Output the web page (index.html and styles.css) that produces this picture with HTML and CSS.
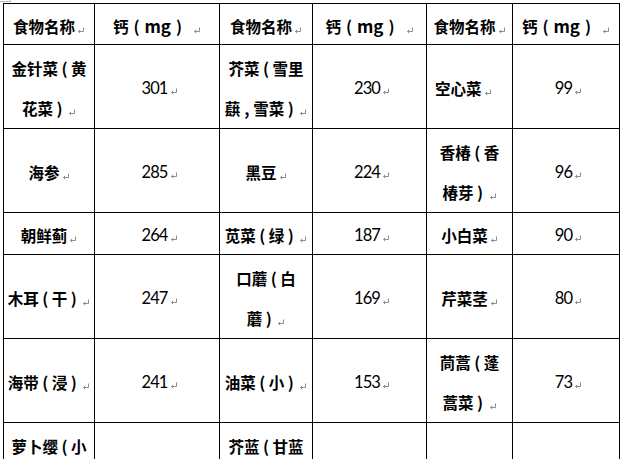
FILE: index.html
```html
<!DOCTYPE html>
<html lang="zh-CN">
<head>
<meta charset="utf-8">
<title>食物钙含量</title>
<link rel="stylesheet" href="styles.css">
</head>
<body>
<span class="handle"></span>
<div class="sheet">
  <div class="cell name"><p>食物名称<svg class="pm" viewBox="0 0 8 8"><path d="M6.5 1.5V5.5H1.5M3.2 3.8L1.5 5.5L3.2 7.2"/></svg></p></div>
  <div class="cell name"><p>钙<i class="w">(</i><b>mg</b><i class="w">)</i><svg class="pm" viewBox="0 0 8 8"><path d="M6.5 1.5V5.5H1.5M3.2 3.8L1.5 5.5L3.2 7.2"/></svg></p></div>
  <div class="cell name"><p>食物名称<svg class="pm" viewBox="0 0 8 8"><path d="M6.5 1.5V5.5H1.5M3.2 3.8L1.5 5.5L3.2 7.2"/></svg></p></div>
  <div class="cell name"><p>钙<i class="w">(</i><b>mg</b><i class="w">)</i><svg class="pm" viewBox="0 0 8 8"><path d="M6.5 1.5V5.5H1.5M3.2 3.8L1.5 5.5L3.2 7.2"/></svg></p></div>
  <div class="cell name"><p>食物名称<svg class="pm" viewBox="0 0 8 8"><path d="M6.5 1.5V5.5H1.5M3.2 3.8L1.5 5.5L3.2 7.2"/></svg></p></div>
  <div class="cell name"><p>钙<i class="w">(</i><b>mg</b><i class="w">)</i><svg class="pm" viewBox="0 0 8 8"><path d="M6.5 1.5V5.5H1.5M3.2 3.8L1.5 5.5L3.2 7.2"/></svg></p></div>

  <div class="cell name"><p>金针菜<i>(</i>黄<br>花菜<i>)</i><svg class="pm" viewBox="0 0 8 8"><path d="M6.5 1.5V5.5H1.5M3.2 3.8L1.5 5.5L3.2 7.2"/></svg></p></div>
  <div class="cell num"><p>301<svg class="pm" viewBox="0 0 8 8"><path d="M6.5 1.5V5.5H1.5M3.2 3.8L1.5 5.5L3.2 7.2"/></svg></p></div>
  <div class="cell name"><p>芥菜<i>(</i>雪里<br>蕻<i>,</i>雪菜<i>)</i><svg class="pm" viewBox="0 0 8 8"><path d="M6.5 1.5V5.5H1.5M3.2 3.8L1.5 5.5L3.2 7.2"/></svg></p></div>
  <div class="cell num"><p>230<svg class="pm" viewBox="0 0 8 8"><path d="M6.5 1.5V5.5H1.5M3.2 3.8L1.5 5.5L3.2 7.2"/></svg></p></div>
  <div class="cell name left"><p>空心菜<svg class="pm" viewBox="0 0 8 8"><path d="M6.5 1.5V5.5H1.5M3.2 3.8L1.5 5.5L3.2 7.2"/></svg></p></div>
  <div class="cell num"><p>99<svg class="pm" viewBox="0 0 8 8"><path d="M6.5 1.5V5.5H1.5M3.2 3.8L1.5 5.5L3.2 7.2"/></svg></p></div>

  <div class="cell name"><p>海参<svg class="pm" viewBox="0 0 8 8"><path d="M6.5 1.5V5.5H1.5M3.2 3.8L1.5 5.5L3.2 7.2"/></svg></p></div>
  <div class="cell num"><p>285<svg class="pm" viewBox="0 0 8 8"><path d="M6.5 1.5V5.5H1.5M3.2 3.8L1.5 5.5L3.2 7.2"/></svg></p></div>
  <div class="cell name"><p>黑豆<svg class="pm" viewBox="0 0 8 8"><path d="M6.5 1.5V5.5H1.5M3.2 3.8L1.5 5.5L3.2 7.2"/></svg></p></div>
  <div class="cell num"><p>224<svg class="pm" viewBox="0 0 8 8"><path d="M6.5 1.5V5.5H1.5M3.2 3.8L1.5 5.5L3.2 7.2"/></svg></p></div>
  <div class="cell name"><p>香椿<i>(</i>香<br>椿芽<i>)</i><svg class="pm" viewBox="0 0 8 8"><path d="M6.5 1.5V5.5H1.5M3.2 3.8L1.5 5.5L3.2 7.2"/></svg></p></div>
  <div class="cell num"><p>96<svg class="pm" viewBox="0 0 8 8"><path d="M6.5 1.5V5.5H1.5M3.2 3.8L1.5 5.5L3.2 7.2"/></svg></p></div>

  <div class="cell name"><p>朝鲜蓟<svg class="pm" viewBox="0 0 8 8"><path d="M6.5 1.5V5.5H1.5M3.2 3.8L1.5 5.5L3.2 7.2"/></svg></p></div>
  <div class="cell num"><p>264<svg class="pm" viewBox="0 0 8 8"><path d="M6.5 1.5V5.5H1.5M3.2 3.8L1.5 5.5L3.2 7.2"/></svg></p></div>
  <div class="cell name"><p>苋菜<i>(</i>绿<i>)</i><svg class="pm" viewBox="0 0 8 8"><path d="M6.5 1.5V5.5H1.5M3.2 3.8L1.5 5.5L3.2 7.2"/></svg></p></div>
  <div class="cell num"><p>187<svg class="pm" viewBox="0 0 8 8"><path d="M6.5 1.5V5.5H1.5M3.2 3.8L1.5 5.5L3.2 7.2"/></svg></p></div>
  <div class="cell name"><p>小白菜<svg class="pm" viewBox="0 0 8 8"><path d="M6.5 1.5V5.5H1.5M3.2 3.8L1.5 5.5L3.2 7.2"/></svg></p></div>
  <div class="cell num"><p>90<svg class="pm" viewBox="0 0 8 8"><path d="M6.5 1.5V5.5H1.5M3.2 3.8L1.5 5.5L3.2 7.2"/></svg></p></div>

  <div class="cell name"><p>木耳<i>(</i>干<i>)</i><svg class="pm" viewBox="0 0 8 8"><path d="M6.5 1.5V5.5H1.5M3.2 3.8L1.5 5.5L3.2 7.2"/></svg></p></div>
  <div class="cell num"><p>247<svg class="pm" viewBox="0 0 8 8"><path d="M6.5 1.5V5.5H1.5M3.2 3.8L1.5 5.5L3.2 7.2"/></svg></p></div>
  <div class="cell name"><p>口蘑<i>(</i>白<br>蘑<i>)</i><svg class="pm" viewBox="0 0 8 8"><path d="M6.5 1.5V5.5H1.5M3.2 3.8L1.5 5.5L3.2 7.2"/></svg></p></div>
  <div class="cell num"><p>169<svg class="pm" viewBox="0 0 8 8"><path d="M6.5 1.5V5.5H1.5M3.2 3.8L1.5 5.5L3.2 7.2"/></svg></p></div>
  <div class="cell name"><p>芹菜茎<svg class="pm" viewBox="0 0 8 8"><path d="M6.5 1.5V5.5H1.5M3.2 3.8L1.5 5.5L3.2 7.2"/></svg></p></div>
  <div class="cell num"><p>80<svg class="pm" viewBox="0 0 8 8"><path d="M6.5 1.5V5.5H1.5M3.2 3.8L1.5 5.5L3.2 7.2"/></svg></p></div>

  <div class="cell name"><p>海带<i>(</i>浸<i>)</i><svg class="pm" viewBox="0 0 8 8"><path d="M6.5 1.5V5.5H1.5M3.2 3.8L1.5 5.5L3.2 7.2"/></svg></p></div>
  <div class="cell num"><p>241<svg class="pm" viewBox="0 0 8 8"><path d="M6.5 1.5V5.5H1.5M3.2 3.8L1.5 5.5L3.2 7.2"/></svg></p></div>
  <div class="cell name"><p>油菜<i>(</i>小<i>)</i><svg class="pm" viewBox="0 0 8 8"><path d="M6.5 1.5V5.5H1.5M3.2 3.8L1.5 5.5L3.2 7.2"/></svg></p></div>
  <div class="cell num"><p>153<svg class="pm" viewBox="0 0 8 8"><path d="M6.5 1.5V5.5H1.5M3.2 3.8L1.5 5.5L3.2 7.2"/></svg></p></div>
  <div class="cell name"><p>茼蒿<i>(</i>蓬<br>蒿菜<i>)</i><svg class="pm" viewBox="0 0 8 8"><path d="M6.5 1.5V5.5H1.5M3.2 3.8L1.5 5.5L3.2 7.2"/></svg></p></div>
  <div class="cell num"><p>73<svg class="pm" viewBox="0 0 8 8"><path d="M6.5 1.5V5.5H1.5M3.2 3.8L1.5 5.5L3.2 7.2"/></svg></p></div>

  <div class="cell name"><p>萝卜缨<i>(</i>小<br>萝卜<i>)</i><svg class="pm" viewBox="0 0 8 8"><path d="M6.5 1.5V5.5H1.5M3.2 3.8L1.5 5.5L3.2 7.2"/></svg></p></div>
  <div class="cell num"><p>238<svg class="pm" viewBox="0 0 8 8"><path d="M6.5 1.5V5.5H1.5M3.2 3.8L1.5 5.5L3.2 7.2"/></svg></p></div>
  <div class="cell name"><p>芥蓝<i>(</i>甘蓝<br>菜<i>)</i><svg class="pm" viewBox="0 0 8 8"><path d="M6.5 1.5V5.5H1.5M3.2 3.8L1.5 5.5L3.2 7.2"/></svg></p></div>
  <div class="cell num"><p>128<svg class="pm" viewBox="0 0 8 8"><path d="M6.5 1.5V5.5H1.5M3.2 3.8L1.5 5.5L3.2 7.2"/></svg></p></div>
  <div class="cell name"><p>菠菜<svg class="pm" viewBox="0 0 8 8"><path d="M6.5 1.5V5.5H1.5M3.2 3.8L1.5 5.5L3.2 7.2"/></svg></p></div>
  <div class="cell num"><p>66<svg class="pm" viewBox="0 0 8 8"><path d="M6.5 1.5V5.5H1.5M3.2 3.8L1.5 5.5L3.2 7.2"/></svg></p></div>
</div>
</body>
</html>
```

FILE: styles.css
```css
html, body {
  margin: 0;
  padding: 0;
  overflow: hidden;
  background: #fff;
}

body {
  position: relative;
  width: 623px;
  height: 459px;
  font-family: "Noto Sans CJK SC", "Noto Sans", sans-serif;
  color: #000;
}

.handle {
  position: absolute;
  left: 0;
  top: 0;
  width: 10px;
  height: 1px;
  border-bottom: 1px solid #b8b8b8;
  border-right: 1px solid #b8b8b8;
}

.sheet {
  display: grid;
  grid-template-columns: 91px 125px 93px 114px 86px 107px;
  grid-template-rows: 41px 84px 84px 42px 84px 84px 84px;
  width: max-content;
  margin: 3px 0 0 3px;
  border-left: 1px solid #000;
  border-top: 1px solid #000;
}

.cell {
  box-sizing: border-box;
  border-right: 1px solid #000;
  border-bottom: 1px solid #000;
  display: flex;
  align-items: center;
  justify-content: center;
  padding: 3px 0 0;
}

.cell p {
  margin: 0;
  line-height: 40px;
  text-align: center;
  white-space: nowrap;
}

.name {
  font-size: 15.5px;
  font-weight: 700;
}

.name b {
  font-size: 17px;
  font-weight: 700;
}

.name i {
  display: inline-block;
  width: 13px;
  text-align: center;
  font-style: normal;
  font-size: 16px;
}

.name i.w {
  width: 16px;
}

.left {
  justify-content: flex-start;
  padding-left: 8px;
}

.left p {
  text-align: left;
}

.num {
  font-family: Lato, "Liberation Sans", sans-serif;
  font-size: 16.5px;
  font-weight: 400;
  letter-spacing: -0.9px;
  padding-left: 5px;
}

.pm {
  width: 8px;
  height: 8px;
  margin-left: 2px;
  vertical-align: -1px;
}

.w + .pm {
  margin-left: 6px;
}

.pm path {
  fill: none;
  stroke: #8c8c8c;
  stroke-width: 1;
}
```
